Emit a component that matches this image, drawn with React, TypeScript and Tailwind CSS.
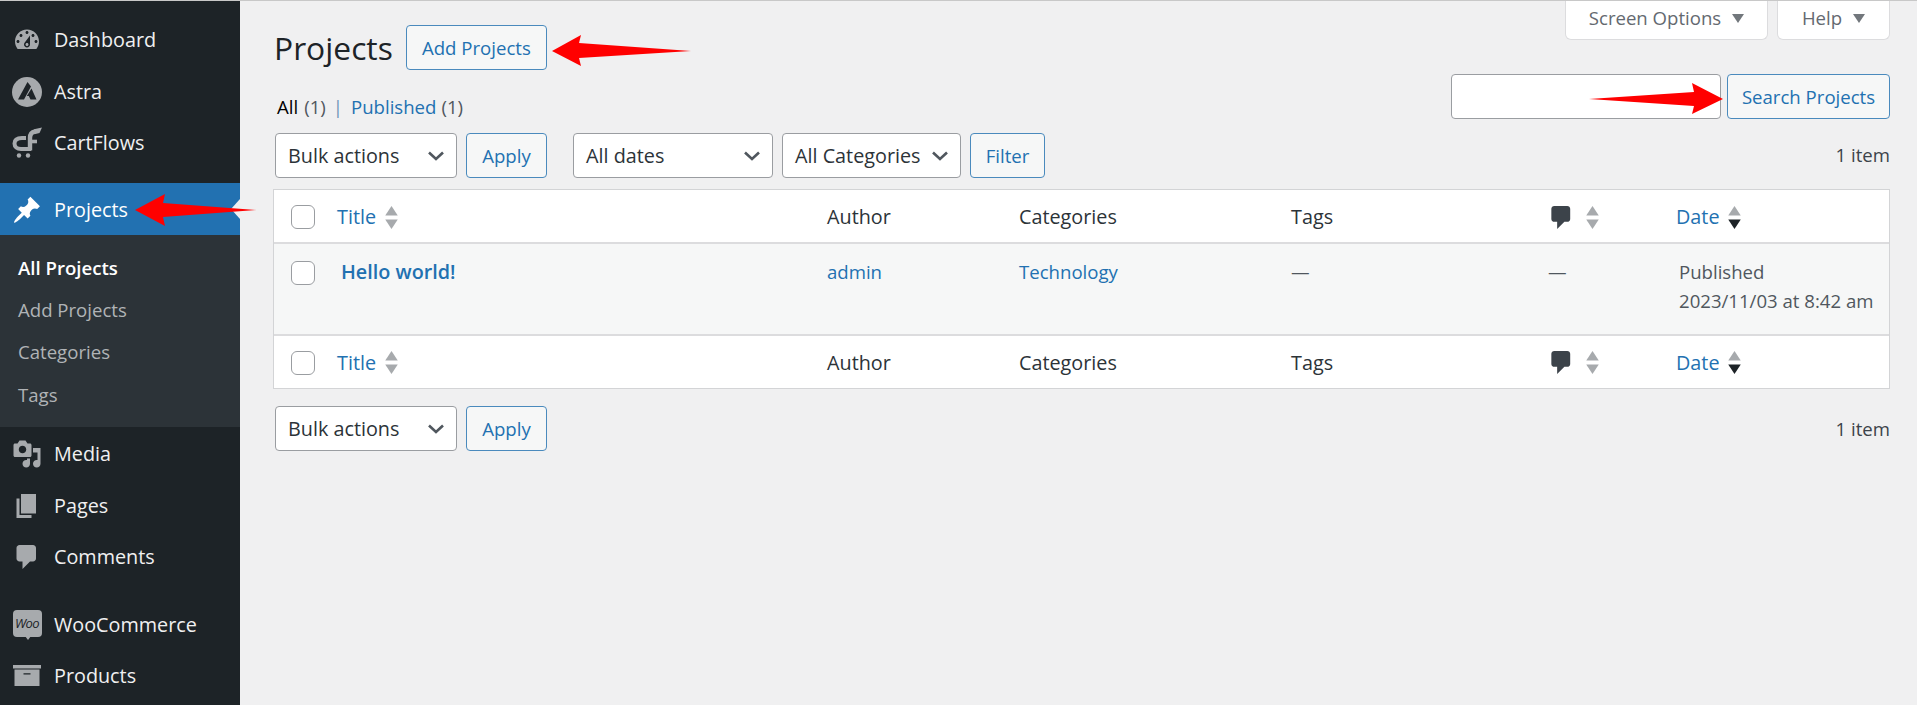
import React from 'react';

const dashicons = {
  dashboard:
    'M3.76 16h12.48c1.1-1.37 1.76-3.11 1.76-5 0-4.42-3.58-8-8-8s-8 3.58-8 8c0 1.89.66 3.63 1.76 5zM10 4c.55 0 1 .45 1 1s-.45 1-1 1-1-.45-1-1 .45-1 1-1zM6 6c.55 0 1 .45 1 1s-.45 1-1 1-1-.45-1-1 .45-1 1-1zm8 0c.55 0 1 .45 1 1s-.45 1-1 1-1-.45-1-1 .45-1 1-1zm-5.37 5.55L12 7v6c0 1.1-.9 2-2 2s-2-.9-2-2c0-.57.24-1.08.63-1.45zM4 10c.55 0 1 .45 1 1s-.45 1-1 1-1-.45-1-1 .45-1 1-1zm12 0c.55 0 1 .45 1 1s-.45 1-1 1-1-.45-1-1 .45-1 1-1zm-5 3c0-.55-.45-1-1-1s-1 .45-1 1 .45 1 1 1 1-.45 1-1z',
  pin: 'M10.44 3.02l1.82-1.82 6.36 6.35-1.83 1.82c-1.05-.68-2.48-.57-3.41.36l-.75.75c-.92.93-1.04 2.35-.35 3.41l-1.83 1.82-2.41-2.41-2.8 2.79c-.42.42-3.38 2.71-3.8 2.29s1.86-3.39 2.28-3.81l2.79-2.79L4.1 9.36l1.83-1.82c1.05.69 2.48.57 3.4-.36l.75-.75c.93-.92 1.05-2.35.36-3.41z',
  media:
    'M13 11V4c0-.55-.45-1-1-1h-1.67L9 1H5L3.67 3H2c-.55 0-1 .45-1 1v7c0 .55.45 1 1 1h10c.55 0 1-.45 1-1zM7 4.5c1.38 0 2.5 1.12 2.5 2.5S8.38 9.5 7 9.5 4.5 8.38 4.5 7 5.62 4.5 7 4.5zM14 6h5v10.5c0 1.38-1.12 2.5-2.5 2.5S14 17.88 14 16.5s1.12-2.5 2.5-2.5c.17 0 .34.02.5.05V9h-3V6zm-4 8.05V13h2v3.5c0 1.38-1.12 2.5-2.5 2.5S7 17.88 7 16.5 8.12 14 9.5 14c.17 0 .34.02.5.05z',
  pages: 'M6 15V2h10v13H6zm-1 1h8v2H3V5h2v11z',
  comments:
    'M5 2h9c1.1 0 2 .9 2 2v7c0 1.1-.9 2-2 2h-2l-5 5v-5H5c-1.1 0-2-.9-2-2V4c0-1.1.9-2 2-2z',
};

const Dash: React.FC<{ d: string; className?: string }> = ({ d, className = 'w-[30px] h-[30px]' }) => (
  <svg viewBox="0 0 20 20" className={className} fill="currentColor">
    <path d={d} />
  </svg>
);

const AstraIcon = () => (
  <svg viewBox="0 0 30 30" className="w-[30px] h-[30px]">
    <circle cx="15" cy="15" r="15" fill="#a7aaad" />
    <path d="M15.5 5 L6 22.5 L12 22.5 L19 9.5 Z M19.5 11.5 L24.5 22.5 L18.5 22.5 L16.8 19 L14.8 19 Z" fill="#1d2327" />
  </svg>
);

const CartFlowsIcon = () => (
  <svg viewBox="0 0 30 31" className="w-[30px] h-[31px]" fill="none" stroke="#a7aaad">
    <path d="M14 11 H10 C5 11 2.5 13 2.5 16.5 C2.5 20 5 22 9 22 H19" strokeWidth="4" />
    <path d="M18 23.5 V11 C18 6.5 20 5 23 4.5" strokeWidth="4.4" />
    <path d="M22 2.3 L30 0.5 L27.5 6 L22.5 7.2 Z" fill="#a7aaad" stroke="none" />
    <path d="M18 14.5 H25" strokeWidth="3.6" />
    <circle cx="7" cy="28.5" r="2.2" fill="#a7aaad" stroke="none" />
    <circle cx="16" cy="28.5" r="2.2" fill="#a7aaad" stroke="none" />
  </svg>
);

const WooIcon = () => (
  <div className="relative w-[29px] h-[30px]">
    <div className="w-[29px] h-[27px] rounded-[4px] bg-[#a7aaad] flex items-center justify-center text-[13px] italic leading-none text-[#1d2327] font-medium tracking-[-0.5px]">
      Woo
    </div>
    <div className="absolute left-[12px] top-[26px] w-0 h-0 border-l-[3px] border-r-[3px] border-t-[4px] border-l-transparent border-r-transparent border-t-[#a7aaad]" />
  </div>
);

const ArchiveIcon = () => (
  <svg viewBox="0 0 28 21" className="w-[28px] h-[21px]">
    <path d="M0 0h28v3.5H0z" fill="#a7aaad" />
    <path d="M1.5 4.5H26.5V21H1.5z M10.5 8.2V9.6H17.5V8.2z" fill="#a7aaad" fillRule="evenodd" />
  </svg>
);

const MenuItem: React.FC<{ label: string; icon: React.ReactNode; active?: boolean; className?: string }> = ({
  label,
  icon,
  active,
  className = 'h-[51px]',
}) => (
  <div className={`relative flex items-center text-[19.8px] ${active ? 'bg-[#2271b1] text-white' : 'text-[#f0f0f1]'} ${className}`}>
    <div className={`w-[54px] flex items-center justify-center ${active ? 'text-white' : 'text-[#a7aaad]'}`}>{icon}</div>
    <span>{label}</span>
    {active && (
      <div className="absolute right-0 top-[16px] w-0 h-0 border-y-[10px] border-r-[9px] border-y-transparent border-r-[#f0f0f1]" />
    )}
  </div>
);

const SecondaryButton: React.FC<{ label: string; className?: string }> = ({ label, className = '' }) => (
  <div className={`h-[45px] flex items-center justify-center rounded-[4px] border border-[#4a8abd] bg-[#f6f7f7] text-[#2271b1] text-[18.6px] ${className}`}>
    {label}
  </div>
);

const Select: React.FC<{ label: string; className: string }> = ({ label, className }) => (
  <div className={`h-[45px] flex items-center justify-between pl-[12px] pr-[12px] rounded-[4px] border border-[#9a9da1] bg-white text-[#2c3338] text-[19.8px] ${className}`}>
    <span className="pt-[1px]">{label}</span>
    <svg viewBox="0 0 16 10" className="w-[16px] h-[10px] ml-1 shrink-0" fill="none" stroke="#50575e" strokeWidth="2.6">
      <path d="M1 1.5 L8 8 L15 1.5" />
    </svg>
  </div>
);

const Checkbox = () => <div className="w-[24px] h-[24px] rounded-[6px] border border-[#9a9da1] bg-white" />;

const SortArrows: React.FC<{ dark?: boolean; className?: string }> = ({ dark, className = '' }) => (
  <svg viewBox="0 0 12 22" className={`w-[13px] h-[23px] ${className}`}>
    <path d="M6 0 L12 9 H0 Z" fill="#a7aaad" />
    <path d="M6 22 L0 13 H12 Z" fill={dark ? '#1d2327' : '#a7aaad'} />
  </svg>
);

const columns = 'grid grid-cols-[63px_490px_192px_272px_260px_125px_1fr]';

const TableHead: React.FC<{ className: string }> = ({ className }) => (
  <div className={`${columns} items-center text-[19.8px] text-[#2c3338] bg-white ${className}`}>
    <div className="pl-[17px] flex"><Checkbox /></div>
    <div className="flex items-center text-[#2271b1]">
      <span>Title</span>
      <SortArrows className="ml-[9px]" />
    </div>
    <div>Author</div>
    <div>Categories</div>
    <div>Tags</div>
    <div className="flex items-center">
      <Dash d={dashicons.comments} className="w-[29px] h-[29px] text-[#3c434a] -ml-[4px]" />
      <SortArrows className="ml-[10px]" />
    </div>
    <div className="flex items-center text-[#2271b1]">
      <span>Date</span>
      <SortArrows dark className="ml-[8px]" />
    </div>
  </div>
);

const ItemCount = ({ className = '' }: { className?: string }) => (
  <div className={`text-[18.6px] text-[#3c434a] leading-[24px] ${className}`}>1 item</div>
);

const Arrow: React.FC<{ points: string }> = ({ points }) => <polygon points={points} fill="#ff0000" />;

export default function App() {
  return (
    <div
      className="relative w-[1917px] h-[705px] overflow-hidden flex border-t border-[#c8c8c8] bg-[#f0f0f1]"
      style={{ fontFamily: '"Open Sans", "Noto Sans", sans-serif' }}
    >
      <aside className="w-[240px] shrink-0 bg-[#1d2327] pt-[14px]">
        <MenuItem label="Dashboard" icon={<Dash d={dashicons.dashboard} />} className="h-[51px] pb-[2px]" />
        <MenuItem label="Astra" icon={<AstraIcon />} />
        <MenuItem label="CartFlows" icon={<CartFlowsIcon />} />
        <div className="h-[15px]" />
        <MenuItem label="Projects" active icon={<Dash d={dashicons.pin} />} className="h-[52px] pt-[1px]" />
        <div className="bg-[#2c3338] pt-[12px] pb-[12px] pl-[18px] text-[18.6px] text-[#b0b3b6]">
          <div className="h-[42px] flex items-center font-semibold text-white">All Projects</div>
          <div className="h-[42px] flex items-center">Add Projects</div>
          <div className="h-[42px] flex items-center">Categories</div>
          <div className="h-[42px] flex items-center pt-[2px]">Tags</div>
        </div>
        <MenuItem label="Media" icon={<Dash d={dashicons.media} />} className="h-[53px]" />
        <MenuItem label="Pages" icon={<Dash d={dashicons.pages} />} />
        <MenuItem label="Comments" icon={<Dash d={dashicons.comments} />} />
        <div className="h-[17px]" />
        <MenuItem label="WooCommerce" icon={<WooIcon />} />
        <MenuItem label="Products" icon={<ArchiveIcon />} />
      </aside>

      <main className="flex-1 pl-[33px] pr-[27px]">
        <div className="flex justify-between items-start h-[188px]">
          <div className="pl-[2px] pt-[24px]">
            <div className="flex items-center h-[45px]">
              <h1 className="text-[31.8px] text-[#1d2327] leading-none -ml-[1px]">Projects</h1>
              <SecondaryButton label="Add Projects" className="w-[141px] ml-[13px]" />
            </div>
            <div className="flex items-center h-[24px] mt-[25px] ml-[2px] text-[18.6px] text-[#50575e]">
              <span className="text-black font-medium">All</span>
              <span className="ml-[6px]">(1)</span>
              <span className="ml-[7px] text-[#6f97b8]">|</span>
              <span className="ml-[8px] text-[#2271b1]">Published</span>
              <span className="ml-[5px]">(1)</span>
            </div>
            <div className="flex items-center mt-[14px]">
              <Select label="Bulk actions" className="w-[182px]" />
              <SecondaryButton label="Apply" className="w-[81px] ml-[9px]" />
              <Select label="All dates" className="w-[200px] ml-[26px]" />
              <Select label="All Categories" className="w-[179px] ml-[9px]" />
              <SecondaryButton label="Filter" className="w-[75px] ml-[9px]" />
            </div>
          </div>
          <div className="flex flex-col items-end">
            <div className="flex gap-[9px]">
              <div className="w-[203px] h-[39px] pb-[4px] flex items-center justify-center gap-[11px] bg-white border border-t-0 border-[#dcdcde] rounded-b-[6px] text-[18.6px] text-[#646970]">
                Screen Options
                <span className="w-0 h-0 border-x-[6px] border-t-[9px] border-x-transparent border-t-[#72777c]" />
              </div>
              <div className="w-[113px] h-[39px] pb-[4px] flex items-center justify-center gap-[11px] bg-white border border-t-0 border-[#dcdcde] rounded-b-[6px] text-[18.6px] text-[#646970]">
                Help
                <span className="w-0 h-0 border-x-[6px] border-t-[9px] border-x-transparent border-t-[#72777c]" />
              </div>
            </div>
            <div className="flex mt-[34px] gap-[6px]">
              <div className="w-[270px] h-[45px] rounded-[4px] border border-[#9a9da1] bg-white" />
              <SecondaryButton label="Search Projects" className="w-[163px]" />
            </div>
            <ItemCount className="mt-[24px]" />
          </div>
        </div>

        <div className="border border-[#d3d4d6]">
          <TableHead className="h-[54px] pt-[2px] border-b-2 border-[#dcdcde]" />
          <div className={`${columns} h-[90px] pt-[10px] bg-[#f6f7f7] text-[18.6px] text-[#50575e] leading-[29px]`}>
            <div className="pl-[17px] pt-[7px]"><Checkbox /></div>
            <div className="pl-[4px] pt-[3px] text-[19.8px] font-semibold text-[#2271b1]">Hello world!</div>
            <div className="pt-[3px] text-[#2271b1]">admin</div>
            <div className="pt-[3px] text-[#2271b1]">Technology</div>
            <div className="pt-[3px]">—</div>
            <div className="pt-[3px] -ml-[3px]">—</div>
            <div className="pt-[3px] pl-[3px] whitespace-nowrap">
              <div>Published</div>
              <div>2023/11/03 at 8:42 am</div>
            </div>
          </div>
          <TableHead className="h-[54px] pt-[1px] border-t-2 border-[#dcdcde]" />
        </div>

        <div className="flex items-center justify-between mt-[17px] pl-[2px]">
          <div className="flex items-center">
            <Select label="Bulk actions" className="w-[182px]" />
            <SecondaryButton label="Apply" className="w-[81px] ml-[9px]" />
          </div>
          <ItemCount />
        </div>
      </main>

      {/* red annotation arrows drawn over the page */}
      <svg className="absolute left-0 top-[-1px] w-[1917px] h-[705px] pointer-events-none" viewBox="0 0 1917 705">
        <Arrow points="135,210 165,194 163,203 256,210 163,217 165,226" />
        <Arrow points="552,51 581,35 579,43 691,51 579,58 581,66" />
        <Arrow points="1723,99 1692,83 1694,92 1589,99 1694,106 1692,114" />
      </svg>
    </div>
  );
}
